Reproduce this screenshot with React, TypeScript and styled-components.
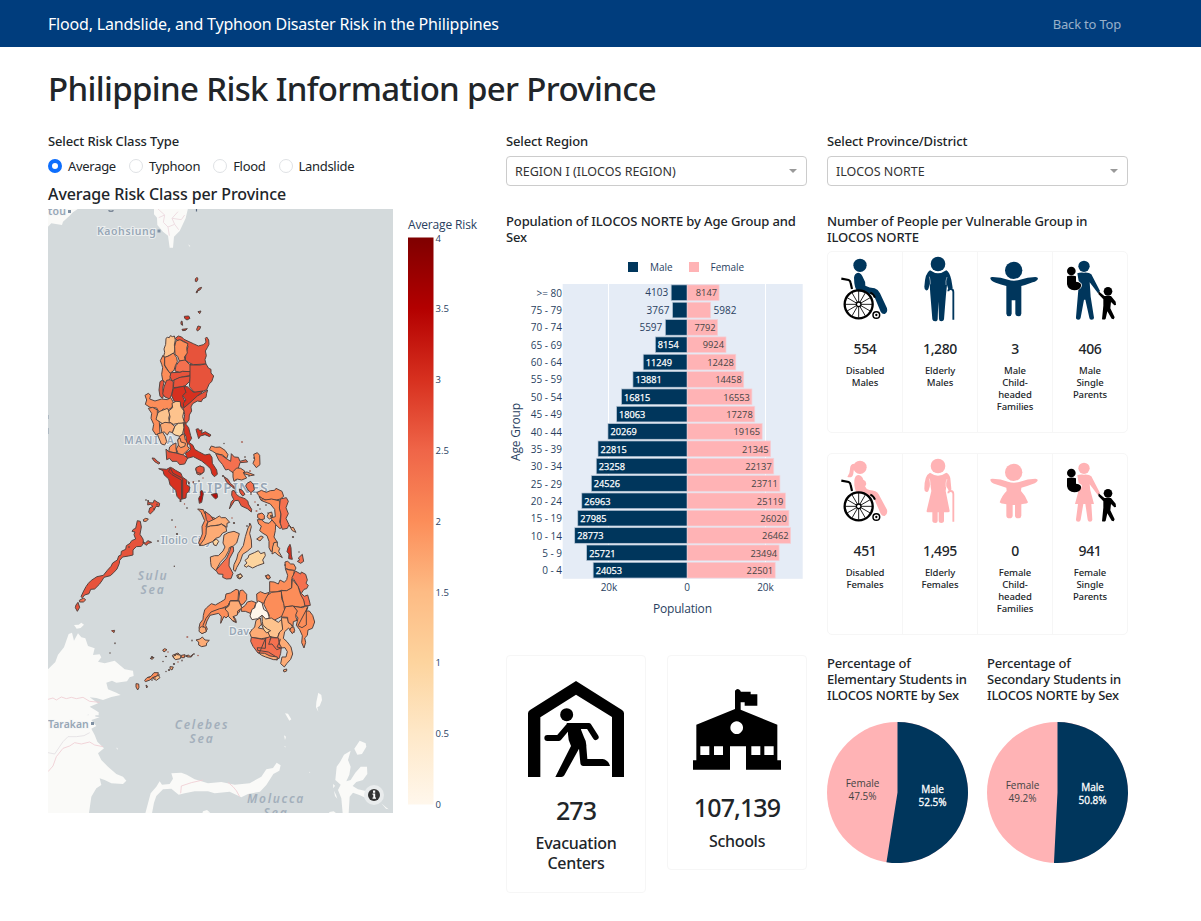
import React from 'react';
import styled, { createGlobalStyle } from 'styled-components';

const NAVY = '#00365c';
const PINK = '#ffb3b5';
const UI = '"Segoe UI", "Noto Sans", sans-serif';
const PLOT = '"Open Sans", "Noto Sans", sans-serif';

const GlobalStyle = createGlobalStyle`
  *, *::before, *::after { box-sizing: border-box; }
  body { margin: 0; background: #fff; color: #212529; font-family: ${UI}; }
  h1, h2, h3, p { margin: 0; font-weight: 500; }
  svg { display: block; }
`;

const Navbar = styled.header`
  display: flex;
  align-items: center;
  justify-content: space-between;
  height: 47px;
  padding: 0 80px 0 48px;
  background: #003d7d;
`;
const Brand = styled.span`
  color: #fff;
  font-size: 16px;
  letter-spacing: -0.19px;
`;
const NavLink = styled.a`
  color: rgba(255, 255, 255, 0.6);
  font-size: 13px;
  letter-spacing: -0.2px;
`;
const Main = styled.main`
  padding: 21px 48px 0;
`;
const PageTitle = styled.h1`
  font-size: 33px;
  line-height: 42px;
  letter-spacing: -0.67px;
  white-space: nowrap;
`;
const Columns = styled.div`
  display: grid;
  grid-template-columns: 434px 301px 301px;
  column-gap: 24px;
  margin-top: 23px;
  & > :last-child { margin-left: -4px; margin-right: 4px; }
`;
const Column = styled.section`
  display: flex;
  flex-direction: column;
`;
const Label = styled.h3`
  font-size: 13px;
  line-height: 16px;
  letter-spacing: -0.12px;
`;
const RadioGroup = styled.div`
  display: flex;
  gap: 13px;
  margin-top: 9px;
`;
const RadioItem = styled.label`
  display: flex;
  align-items: center;
  gap: 6px;
  font-size: 13px;
  line-height: 16px;
  letter-spacing: -0.3px;
`;
const RadioDot = styled.span<{ $on?: boolean }>`
  width: 14px;
  height: 14px;
  border-radius: 50%;
  border: ${(p) => (p.$on ? '4px solid #0d6efd' : '1px solid #dfe2e5')};
  background: #fff;
`;
const MapTitle = styled.h2`
  margin: 10px 0 5px;
  font-size: 16px;
  line-height: 20px;
  letter-spacing: -0.1px;
`;
const Select = styled.div`
  display: flex;
  align-items: center;
  justify-content: space-between;
  height: 30px;
  margin-top: 7px;
  padding: 0 9px 0 8px;
  border: 1px solid #ccc;
  border-radius: 4px;
  color: #333;
  font-size: 12.5px;
  &::after {
    content: '';
    border: 4.5px solid transparent;
    border-top-color: #999;
    border-bottom: 0;
  }
`;
const ChartTitle = styled(Label)`
  margin-top: 27px;
`;
const StatRow = styled.div`
  display: grid;
  grid-template-columns: 140px 140px;
  justify-content: space-between;
  align-items: start;
  margin-top: 10px;
`;
const StatCard = styled.article<{ $top: number; $bottom: number }>`
  display: flex;
  flex-direction: column;
  align-items: center;
  padding: ${(p) => p.$top}px 20px ${(p) => p.$bottom}px;
  border: 1px solid #f6f6f6;
  border-radius: 4px;
  text-align: center;
`;
const StatValue = styled.p<{ $gap: number }>`
  margin-top: ${(p) => p.$gap}px;
  font-size: 25px;
  line-height: 32px;
  letter-spacing: -0.9px;
`;
const StatLabel = styled.p<{ $gap: number }>`
  margin-top: ${(p) => p.$gap}px;
  font-size: 16px;
  line-height: 20px;
  letter-spacing: -0.3px;
`;
const GroupCards = styled.div<{ $gap: number }>`
  display: grid;
  grid-template-columns: 74px repeat(3, 75px);
  width: 301px;
  height: 182px;
  margin-top: ${(p) => p.$gap}px;
  border: 1px solid #f6f6f6;
  border-radius: 5px;
`;
const GroupCard = styled.article`
  display: flex;
  flex-direction: column;
  align-items: center;
  text-align: center;
  & + & { border-left: 1px solid #f6f6f6; }
  & > svg { flex: none; margin-left: -1px; }
`;
const GroupValue = styled.p`
  margin-top: 12px;
  font-size: 14px;
  line-height: 20px;
  letter-spacing: -0.4px;
`;
const GroupLabel = styled.p`
  width: 43px;
  margin-top: 6px;
  font-size: 9.5px;
  line-height: 12px;
  letter-spacing: -0.08px;
`;
const PieRow = styled.div`
  display: grid;
  grid-template-columns: 141px 141px;
  column-gap: 19px;
  margin-top: 20px;
`;
const PieTitle = styled(Label)`
  margin-bottom: 19px;
  white-space: pre-line;
  letter-spacing: -0.22px;
`;
const PlotSvg = styled.svg`
  font-family: ${PLOT};
  overflow: visible;
`;

/* ---------- risk map ---------- */

const C = {
  w: '#fff5ea', a: '#fdd49e', b: '#fdc38d', c: '#fdab75', d: '#fc8d59',
  e: '#f4704f', f: '#e7533b', g: '#d7301f', h: '#b80f0c',
};
type Shape = [keyof typeof C, string];
const provinces: { x: number; y: number; shapes: Shape[] }[] = [
  {
    x: 48, y: 205,
    shapes: [
      ['f', '442,222 447,217 450,222 446,230 442,229'], ['f', '444,262 452,250 461,247 457,254 449,258 447,264'],
      ['f', '450,320 459,318 455,326'], ['g', '409,334 422,333 426,340 417,345 410,340'],
      ['f', '399,350 402,348 404,361 399,358'], ['g', '402,373 418,371 413,376 404,377'],
      ['f', '446,373 450,363 458,365 455,373 448,378'],
    ],
  },
  {
    x: 130, y: 325,
    shapes: [
      ['b', '108,40 112,37 118,38 121,32 128,35 133,33 136,45 133,60 135,72 132,85 118,91 112,95 106,97 101,94 104,82 102,72 107,58'],
      ['f', '136,40 145,33 155,36 162,43 190,56 205,63 220,59 228,52 226,40 230,36 236,45 237,58 232,68 226,78 229,92 225,104 228,117 190,119 175,112 166,105 168,85 174,65 170,54 155,46 142,46'],
      ['d', '138,48 150,44 160,50 174,56 170,70 172,84 163,96 166,108 148,108 143,94 135,88 134,64'],
      ['d', '91,107 99,91 104,99 103,120 110,132 123,146 119,165 112,179 98,165 95,148 98,128 95,118'],
      ['d', '104,97 118,92 130,84 140,98 142,110 136,122 132,136 120,145 110,130 104,120'],
      ['e', '148,108 165,105 178,118 188,120 190,135 175,141 158,139 150,142 135,138 138,122'],
      ['f', '123,143 150,142 158,139 182,140 180,152 160,155 150,158 126,168 120,155'],
      ['f', '132,165 150,157 182,153 178,170 165,183 150,186 130,188'],
      ['f', '180,120 210,120 228,117 236,130 243,133 243,144 251,153 245,170 238,176 230,194 205,205 192,201 178,185 180,160'],
      ['f', '90,170 98,165 102,172 98,190 101,207 98,220 90,214 87,195'],
      ['f', '102,186 110,166 120,164 130,170 129,190 125,208 119,222 105,216 98,207'],
      ['g', '130,190 165,183 168,200 158,215 168,235 158,250 145,232 132,228 125,212'],
      ['g', '162,185 172,185 190,202 219,198 190,225 162,250 160,235 168,225 158,212 168,202'],
      ['f', '233,195 230,205 228,217 218,222 214,230 202,228 188,236 183,246 185,258 178,270 177,285 168,296 162,285 164,268 160,250 180,233 202,213'],
      ['d', '45,211 55,205 62,211 59,222 75,228 95,222 112,224 122,218 130,232 126,247 113,256 100,252 88,262 80,249 60,247 46,238 50,225'],
      ['d', '55,250 68,247 82,255 82,275 88,292 90,325 78,330 68,315 71,298 63,280 65,265'],
      ['b', '84,263 92,258 105,253 112,250 120,265 116,280 120,293 100,298 90,291 78,283'],
      ['b', '126,235 138,229 151,230 152,245 162,258 158,275 163,292 150,298 145,295 130,298 117,290 120,275 116,258 128,248'],
      ['c', '91,298 105,292 122,294 135,305 130,314 128,323 118,320 112,330 102,320 96,325'],
      ['a', '135,303 145,295 160,294 162,308 158,325 150,334 135,330 127,324'],
      ['c', '82,327 98,322 106,335 110,350 104,360 94,357 89,345'],
      ['d', '150,333 162,326 166,345 174,347 172,363 178,371 166,382 158,390 145,387 139,372 147,357 144,345'],
      ['c', '143,344 150,339 153,351 167,355 164,364 152,368 145,360'],
      ['d', '119,366 127,359 138,354 138,370 140,384 127,382 116,380'],
      ['f', '108,372 116,380 137,384 160,390 173,399 164,417 149,419 141,409 126,409 119,400 110,404'],
      ['g', '163,292 176,308 182,332 185,340 177,352 189,361 194,373 206,380 225,390 239,387 246,397 247,415 260,435 262,448 253,455 246,447 242,432 230,420 215,408 190,395 172,400 166,385 181,375 180,361 170,352 168,335 162,323'],
      ['g', '198,313 205,311 210,318 216,314 215,325 226,320 243,330 239,335 225,329 211,333 206,341 203,331'],
      ['d', '238,374 244,363 256,367 270,366 285,376 294,389 290,401 278,390 259,386 248,379'],
      ['e', '257,386 274,390 289,401 302,409 304,386 313,396 325,397 330,409 348,404 353,411 330,413 325,430 310,444 295,433 287,435 277,418 266,405'],
      ['d', '309,440 320,429 332,430 344,438 342,447 350,459 335,465 321,462 312,469 309,456'],
      ['d', '371,388 382,383 389,391 390,419 379,428 369,415 374,403'],
      ['e', '351,475 362,469 370,478 373,494 363,503 354,495 347,483'],
      ['e', '197,431 211,423 222,431 221,442 210,450 201,447'],
      ['g', '86,431 110,433 121,427 128,430 137,436 153,445 157,456 171,466 169,478 180,487 176,500 169,506 168,519 150,524 141,514 137,496 120,479 116,462 102,449 99,437'],
      ['g', '121,429 129,445 158,460 158,519 155,522 154,465 126,449 116,439'],
      ['f', '66,399 74,400 81,408 90,414 86,417 74,410 70,405'],
      ['h', '216,496 220,506 215,532 208,535 206,520 211,511 211,500'], ['h', '244,508 261,505 263,516 257,522 248,514'],
      ['g', '174,470 179,473 176,477'], ['g', '189,471 191,470 190,473'],
    ],
  },
  {
    x: 180, y: 440,
    shapes: [
      ['f', '156,153 162,151 170,164 178,170 195,176 204,184 205,192 215,208 214,216 202,206 184,198 175,181 164,182 148,207 154,185 161,178 155,166'],
      ['f', '132,110 144,118 151,130 161,138 163,146 150,135 140,127'],
      ['f', '178,147 187,151 195,163 188,168 180,158'], ['d', '189,98 201,96 223,105 212,107 195,102'],
      ['d', '230,158 244,151 259,157 271,152 284,151 288,145 306,154 311,169 301,177 289,180 272,178 263,182 245,175 237,167'],
      ['d', '237,169 255,180 275,177 300,183 299,205 303,222 299,246 306,261 300,266 286,253 272,234 286,230 284,208 271,192 255,186 243,181'],
      ['e', '301,177 319,173 325,184 318,203 325,221 318,235 327,254 322,265 307,268 301,250 303,222 298,204'],
      ['c', '327,255 335,263 340,262 348,277 337,272'],
      ['d', '233,223 246,219 253,226 253,237 243,239 233,233'], ['c', '266,219 275,216 278,230 268,237 261,230'],
      ['d', '232,239 244,239 255,248 267,250 276,240 287,253 286,272 282,291 292,307 280,310 284,326 273,335 267,323 267,304 261,287 249,280 239,272 244,258 236,252'],
      ['c', '278,321 282,308 292,306 292,318 299,325 296,334 307,353 294,345 285,337 276,342'],
      ['c', '230,297 243,288 250,291 240,303'], ['d', '53,207 70,209 75,222 83,224 95,231 105,235 107,244 83,246 78,260 86,268 84,283 74,294 73,306 60,318 56,308 67,282 66,259 74,242 63,217'],
      ['e', '75,214 91,226 100,239 88,251 79,239'],
      ['c', '83,247 104,237 118,228 124,233 137,233 149,247 141,250 141,262 125,252 115,255 89,259 79,268'],
      ['c', '79,262 91,258 115,256 124,252 138,262 140,274 128,279 119,291 107,295 97,305 71,316 59,316 73,297 78,283'],
      ['a', '98,305 109,297 116,304 109,317 102,315'],
      ['c', '132,285 144,278 162,274 178,281 175,292 170,309 160,318 148,323 146,332 136,351 121,367 107,392 94,380 92,368 91,351 104,347 115,347 129,333 135,321 129,309'],
      ['e', '153,320 160,321 161,333 148,357 147,378 159,400 153,416 139,417 128,412 129,403 115,402 108,391 124,372 140,354 149,334'],
      ['c', '204,264 211,251 214,260 209,280 214,300 215,322 203,333 188,343 181,364 170,383 166,394 160,390 162,374 170,357 174,341 190,317 196,290'],
      ['a', '207,345 223,338 235,332 242,341 254,337 256,347 248,360 252,370 232,377 218,384 204,377 200,382 192,377 201,369 195,361 204,354'],
      ['b', '170,406 182,401 187,409 180,417 173,414'],
      ['g', '324,323 330,313 333,323 334,345 337,358 326,356 327,342 321,335'],
      ['e', '355,354 367,343 369,354 371,364 362,370 352,364 359,360'], ['d', '256,407 267,405 271,414 261,417'],
      ['f', '48,83 59,78 72,82 72,94 65,101 52,98 48,90'],
    ],
  },
  {
    x: 48, y: 500,
    shapes: [
      ['f', '300,0 303,8 315,9 319,0 327,6 335,10 333,20 324,19 318,31 307,42 302,37 305,24 315,19 307,13 299,15'],
      ['d', '286,59 293,55 301,57 295,64 287,64'],
      ['f', '268,62 277,64 280,81 276,103 285,117 287,129 280,139 265,140 255,150 255,165 242,168 224,171 215,181 214,190 207,207 197,218 187,227 168,232 162,242 154,253 140,267 128,268 123,281 110,285 103,293 99,290 107,273 114,260 121,250 130,241 147,230 166,226 178,211 189,199 194,189 208,180 212,168 219,165 220,154 233,148 235,137 246,130 251,122 263,117 258,104 261,96 252,94 256,88 263,85'],
      ['f', '284,126 292,129 300,122 311,127 302,130 294,136'], ['f', '84,315 90,307 95,322 88,334 82,323'],
      ['e', '94,301 107,294 113,300 106,306 95,306'], ['d', '191,392 200,391 198,398'],
      ['d', '344,450 350,446 357,449 348,456'], ['c', '306,475 318,472 313,478'],
      ['b', '373,466 390,459 398,468 393,476 377,474'], ['d', '400,466 411,464 409,473 400,473'],
      ['d', '412,468 422,465 426,470 436,462 430,471 419,471'], ['c', '366,500 376,501 372,510 366,506'],
      ['d', '290,541 297,533 309,529 318,518 331,518 329,527 314,533 306,540 292,545'], ['b', '313,534 331,526 336,533 325,541'],
      ['d', '264,551 272,552 273,562 269,570 264,561'], ['d', '294,555 299,559 296,564'],
    ],
  },
  {
    x: 170, y: 560,
    shapes: [
      ['d', '345,6 353,4 362,12 371,12 378,24 374,32 357,29 346,25'],
      ['d', '299,65 312,66 325,72 330,60 343,67 350,59 353,46 346,26 358,30 373,31 370,50 365,57 365,84 350,93 335,91 318,96 299,96'],
      ['e', '376,33 392,42 394,36 407,43 412,60 408,70 415,76 410,86 402,88 394,100 403,109 413,105 419,126 421,136 404,138 401,123 393,112 391,96 383,77 371,58 366,53'],
      ['d', '333,92 350,92 365,84 367,58 384,79 392,104 401,120 405,138 391,142 367,138 342,141'],
      ['d', '283,112 305,97 334,94 335,116 341,130 344,152 340,166 326,174 310,182 292,178 298,166 289,148 282,134'],
      ['d', '210,92 218,90 230,103 230,119 220,132 210,136 206,118'],
      ['d', '206,91 198,88 181,99 168,102 165,118 152,126 136,135 124,131 110,143 104,150 100,166 99,178 90,190 87,204 95,220 107,216 103,190 108,180 119,164 131,154 147,151 162,142 174,137 181,123 204,121'],
      ['d', '182,122 206,122 214,137 208,156 202,162 190,153 188,165 197,178 199,188 188,183 176,166 168,174 162,169 152,190 154,170 146,160 120,166 111,183 107,196 112,207 107,216 99,196 108,175 123,156 149,146 171,142'],
      ['c', '180,123 206,123 216,144 203,153 202,165 189,170 198,185 188,182 176,170 174,157 165,147 177,137'],
      ['c', '88,205 94,200 106,202 109,215 96,221 87,214'],
      ['d', '214,145 226,136 232,126 245,123 258,128 252,145 241,160 226,154 214,154'],
      ['d', '260,102 271,95 285,101 298,97 287,116 281,130 261,125'],
      ['w', '246,148 254,144 258,130 266,123 276,128 281,148 293,156 298,173 287,178 276,166 263,176 246,179 240,168'],
      ['b', '276,166 287,177 304,174 325,187 336,177 338,208 327,219 323,234 300,230 288,232 294,218 280,203 277,185'],
      ['c', '258,181 271,174 274,193 265,204 280,207 293,215 301,232 274,236 244,232 239,219 246,209 254,201'],
      ['a', '274,192 292,207 302,212 290,219 282,210'],
      ['d', '347,140 368,138 385,150 377,169 381,181 370,185 369,198 360,192 353,184 353,172 334,171'],
      ['d', '371,139 397,143 408,138 413,140 409,153 418,153 428,166 434,186 427,205 414,210 412,226 404,234 407,247 402,264 395,248 397,227 389,209 379,196 384,174 377,165 382,153'],
      ['d', '414,140 409,153 409,195 396,203 384,197'],
      ['c', '334,173 352,174 355,188 363,193 370,205 373,217 363,215 356,204 344,215 340,235 351,245 363,261 368,282 362,298 351,310 343,321 332,311 336,291 348,291 352,275 345,263 332,264 327,244 323,233 329,216 338,208'],
      ['e', '244,232 278,238 303,229 300,240 318,251 331,238 327,252 334,261 332,280 327,296 301,288 281,280 264,279 249,259 242,244'],
      ['e', '287,234 286,265 262,263 263,271 295,276 321,292 322,300 302,295 287,287 268,279'],
      ['e', '303,233 326,234 327,249 321,261 334,264 320,269 306,252 296,253'],
      ['c', '266,279 284,280 300,288 322,291 321,299 311,299 287,291 275,286'],
      ['c', '78,240 90,237 97,231 105,240 118,241 110,249 109,257 95,260 86,255 86,246'],
      ['d', '288,48 294,44 301,51 297,58 290,54'], ['d', '362,204 371,200 374,212 367,221 360,211'],
      ['c', '340,330 350,327 350,333 342,336'], ['a', '203,46 211,43 218,49 208,55'],
      ['b', '9,290 19,283 33,286 31,296 16,299'],
    ],
  },
];

const specks: [number, number][] = [
  [112.7, 631], [129, 547], [174.3, 566.3], [180.5, 501], [184.5, 504], [187, 508], [158, 541], [172, 520], [175.5, 527], [177, 534],
  [110, 653], [115, 643.3], [187.3, 637], [192, 640.5], [163, 661.5], [152, 657], [168, 652], [175.3, 655], [187, 656], [194, 654], [198, 655.5],
  [169, 670], [166, 671.5], [159, 675], [155, 678], [152, 680], [149, 677.5], [174, 664], [178, 662], [182, 660.5], [166, 656.5], [157, 504.5],
  [255, 502], [258, 505], [260, 509], [262, 500], [256.5, 511], [266, 505], [268, 513], [271, 516], [259, 514], [251, 494], [247, 526], [249.5, 524],
  [232, 518], [234, 523], [224, 443.5], [245, 457], [250, 471], [249, 476], [236, 480], [223, 476], [193, 482],
  [146, 500], [154, 509], [199, 481], [203, 478], [293, 537], [299, 552], [285, 565], [242, 442], [254, 458],
];

const scaleStops = ['#fff7ec', '#fee8c8', '#fdd49e', '#fdbb84', '#fc8d59', '#ef6548', '#d7301f', '#b30000', '#7f0000'];
const scaleTicks = ['4', '3.5', '3', '2.5', '2', '1.5', '1', '0.5', '0'];

const MapText = styled.text<{ $sea?: boolean; $size?: number }>`
  font-family: "Noto Sans", sans-serif;
  font-size: ${(p) => p.$size ?? (p.$sea ? 12 : 10.5)}px;
  font-weight: 600;
  font-style: ${(p) => (p.$sea ? 'italic' : 'normal')};
  letter-spacing: ${(p) => (p.$sea ? 1.7 : 0.2)}px;
  text-anchor: ${(p) => (p.$sea ? 'middle' : 'start')};
  fill: ${(p) => (p.$sea ? '#a3afbb' : '#98a7b7')};
  stroke: ${(p) => (p.$sea ? 'none' : 'rgba(245, 246, 246, 0.75)')};
  stroke-width: 2px;
  paint-order: stroke;
`;

function RiskMap() {
  return (
    <PlotSvg width={434} height={604} viewBox="48 209 434 604">
      <defs>
        <linearGradient id="risk" x1="0" y1="1" x2="0" y2="0">
          {scaleStops.map((c, i) => <stop key={c} offset={i / 8} stopColor={c} />)}
        </linearGradient>
        <clipPath id="frame"><rect x={48} y={209} width={345} height={604} /></clipPath>
      </defs>
      <g clipPath="url(#frame)">
        <rect x={48} y={209} width={345} height={604} fill="#d4dadc" />
        <g transform="translate(48 620) scale(.33333)" fill="#fafaf8" strokeLinejoin="round">
          <path d="M0,148L22,126 30,104 48,82 62,42 72,38 78,62 90,40 100,52 112,55 120,78 140,85 135,105 155,103 160,112 150,125 170,130 200,122 230,148 255,152 257,168 245,172 237,184 205,188 192,182 175,188 180,208 205,218 218,225 190,231 165,240 145,234 125,232 150,250 125,260 150,275 115,286 155,292 130,300 145,318 130,326 140,345 148,365 168,385 150,400 160,420 180,440 205,462 225,470 235,482 225,492 190,490 170,480 155,475 160,495 145,505 130,530 120,600 0,600Z" />
          <path d="M78,15L92,14 100,8 108,14 98,24 86,26Z M122,276h30v10h-30z M92,286h50v8h-50z" />
          <path d="M292,580L300,550 308,520 325,500 335,484 342,494 365,492 375,476 370,460 400,458 416,464 440,478 480,490 520,486 560,494 605,490 640,470 655,448 675,444 686,428 698,436 694,452 676,462 655,495 636,515 600,522 580,532 545,515 500,520 480,514 440,514 410,520 392,524 370,506 345,508 325,528 318,548 312,580Z" />
          <path d="M908,392L888,404 876,426 866,440 862,480 878,494 870,510 880,535 884,580 902,580 905,530 915,518 936,526 958,536 975,532 950,512 930,508 914,498 925,486 945,480 958,462 957,440 938,440 922,458 908,480 895,484 904,464 908,440 900,420Z" />
          <path d="M935,362L953,370 955,380 942,402 928,404 919,386Z M811,218L820,225 822,240 815,258 808,262 811,275 804,262 805,246Z M711,280L720,281 730,298 724,302Z M708,346l6,4-3,10z M709,378l3,0 0,5z M855,492l6,5-5,8z M858,512l6,12 4,12-7-8z M1000,550l12,10 10,8-8-2z M845,576l12-2 8,6-24,1z M465,574l12-4 10,8-24,2z M205,383l4,1-1,6z M784,455l3,2-3,2z" />
          <g fill="none" stroke="#efcdd2" strokeWidth="2.5">
            <path d="M0,238L15,234 25,240 40,231 55,236 70,232 85,236 105,232 125,244 155,247" />
            <path d="M0,455L15,438 25,410 45,385 65,378 80,368 100,372 125,366 140,375 165,380" />
            <path d="M540,487L555,500 565,512 575,530 M398,520L400,498 430,488 465,480" />
            <path d="M0,398L20,402 45,365 60,350 85,350 108,347 125,338" stroke="#e2dfe2" />
          </g>
        </g>
        <g transform="translate(48 205) scale(.33333)" fill="#fafaf8">
          <path d="M318,10L318,28 327,38 328,60 345,80 360,92 365,128 375,128 378,95 395,78 413,40 420,10Z M0,65L10,55 42,60 45,50 65,32 75,22 95,8 0,8Z M420,118l7,5-2,2z" />
          <path d="M330,12L350,30 346,52 360,66 380,58 372,40 390,20 M350,30L332,38 M372,40L400,44 410,30 M360,66L364,92 M380,58L392,74" fill="none" stroke="#eedde2" strokeWidth="3" />
        </g>
        <MapText x={97} y={235} textLength={59}>Kaohsiung</MapText>
        <MapText x={48} y={215}>tou</MapText>
        <path d="M108.500 210.500q2.500 1.500 5 0M196.500 209v2.500" fill="none" stroke="#5d6c80" strokeWidth="1.200" />
        <path d="M157.500 229.500h3v3h-3z M68 210h3v3h-3z M91 722h3v3h-3z" fill="#7f90a3" />
        <MapText x={124} y={444} textLength={50}>MANILA</MapText>
        <MapText $size={14} x={171} y={493} textLength={97}>PHILIPPINES</MapText>
        <MapText x={161} y={544}>Iloilo City</MapText>
        <MapText x={229} y={635}>Davao</MapText>
        <MapText x={48} y={728} textLength={41}>Tarakan</MapText>
        <MapText $sea x={153} y={580}>Sulu</MapText>
        <MapText $sea x={153} y={594}>Sea</MapText>
        <MapText $sea x={202} y={729}>Celebes</MapText>
        <MapText $sea x={202} y={743}>Sea</MapText>
        <MapText $sea x={276} y={803}>Molucca</MapText>
        <MapText $sea x={276} y={817}>Sea</MapText>
        {provinces.map((g) => (
          <g key={`${g.x}-${g.y}`} transform={`translate(${g.x} ${g.y}) scale(.33333)`} stroke="#55433f" strokeWidth="3" strokeLinejoin="round">
            {g.shapes.map(([c, pts], i) => <polygon key={i} fill={C[c]} points={pts} />)}
          </g>
        ))}
        {specks.map(([x, y], i) => (
          <ellipse key={i} cx={x} cy={y} rx={i % 3 ? 0.7 : 1.1} ry={i % 2 ? 1 : 0.7} fill={i % 4 ? '#55433f' : '#a04b3c'} />
        ))}
        <path d="M48 415v4M48 428v6" stroke="#a3b0bc" strokeWidth="1.500" />
        <circle cx={374} cy={795} r={10} fill="#e9eced" />
        <circle cx={374} cy={795} r={6} fill="#333" />
        <path d="M373 790.500h2.200v2.200H373zM372.500 793.500h2.700v4h.8v1.300h-3.500v-1.300h.8v-2.700h-.8z" fill="#fff" />
      </g>
      <text x={408} y={229} fontSize={12} textLength={69} fill="#2a3f5f">Average Risk</text>
      <rect x={408} y={237.500} width={25.500} height={567} fill="url(#risk)" />
      {scaleTicks.map((t, i) => <text key={t} x={435.500} y={241.500 + i * 70.800} fontSize={9.500} fill="#2a3f5f">{t}</text>)}
    </PlotSvg>
  );
}

/* ---------- population pyramid ---------- */

const population: [string, number, number][] = [
  ['>= 80', 4103, 8147], ['75 - 79', 3767, 5982], ['70 - 74', 5597, 7792], ['65 - 69', 8154, 9924],
  ['60 - 64', 11249, 12428], ['55 - 59', 13881, 14458], ['50 - 54', 16815, 16553], ['45 - 49', 18063, 17278],
  ['40 - 44', 20269, 19165], ['35 - 39', 22815, 21345], ['30 - 34', 23258, 22137], ['25 - 29', 24526, 23711],
  ['20 - 24', 26963, 25119], ['15 - 19', 27985, 26020], ['10 - 14', 28773, 26462], ['5 - 9', 25721, 23494],
  ['0 - 4', 24053, 22501],
];

function Pyramid() {
  const zero = 687.2;
  const k = 0.00391;
  const band = 294.8 / 17;
  return (
    <PlotSvg width={301} height={400} viewBox="506 245 301 400" fill="#2a3f5f">
      <rect x={628} y={262} width={10} height={10} fill={NAVY} />
      <text x={650} y={271} fontSize={10}>Male</text>
      <rect x={689} y={262} width={10} height={10} fill={PINK} />
      <text x={710.500} y={271} fontSize={10}>Female</text>
      <rect x={562.700} y={284} width={240} height={294.800} fill="#e5ecf6" />
      <path d="M608.500 284v294.800M765.500 284v294.800" stroke="#fff" />
      {population.map(([age, m, f], i) => {
        const y = 284 + i * band;
        const base = y + band / 2 + 3.8;
        const mOut = m < 6000;
        const fOut = f < 6000;
        return (
          <g key={age} fontSize={9.3}>
            <rect x={zero - m * k} y={y + 0.9} width={m * k} height={band - 1.700} fill={NAVY} stroke="#b9c7d6" strokeWidth=".7" />
            <rect x={zero} y={y + 0.9} width={f * k} height={band - 1.700} fill={PINK} stroke="#f3d0d7" strokeWidth=".7" />
            <text x={zero - m * k + (mOut ? -3 : 2.500)} y={base} fontSize={mOut ? 10 : 9.2} textAnchor={mOut ? 'end' : 'start'} fill={mOut ? '#2a3f5f' : '#fff'} stroke={mOut ? 'none' : '#fff'} strokeWidth=".25">{m}</text>
            <text x={zero + f * k + (fOut ? 3 : -2)} y={base} fontSize={fOut ? 10 : 9.3} textAnchor={fOut ? 'start' : 'end'} fill={fOut ? '#2a3f5f' : '#444'}>{f}</text>
            <text x={562} y={base + 0.3} fontSize={10} textAnchor="end">{age}</text>
          </g>
        );
      })}
      <g fontSize={10} textAnchor="middle">
        <text x={609} y={590.500}>20k</text>
        <text x={687} y={590.500}>0</text>
        <text x={765.500} y={590.500}>20k</text>
      </g>
      <text x={682.500} y={613} fontSize={12} textAnchor="middle" textLength={59}>Population</text>
      <text transform="translate(519.500 432) rotate(-90)" fontSize={12} textAnchor="middle" textLength={58}>Age Group</text>
    </PlotSvg>
  );
}

/* ---------- people icons ---------- */

type IconProps = { female?: boolean };
const frame = (col: number) => ({ width: 75, height: 75, viewBox: `${23 + col * 225} 21 225 225` });
const tone = (female?: boolean) => (female ? PINK : NAVY);

function Wheelchair({ female }: IconProps) {
  const spokes = Array.from({ length: 12 }, (_, i) => (i * Math.PI) / 6);
  return (
    <svg {...frame(0)}>
      <g fill={tone(female)}>
        <circle cx="122" cy="61" r="20" />
        {female && <path d="M106,50Q92,50 92,66Q92,80 84,90Q100,94 102,80Q103,70 105,64Z" />}
        <path d={female
          ? 'M105,100Q107,84 118,84Q128,86 132,98Q143,102 140,114L137,118Q140,127 150,129Q172,130 178,142L203,188Q206,203 196,207Q188,208 184,200L163,152Q145,142 112,137Q106,128 105,115Z'
          : 'M104,98Q105,84 117,83Q126,84 132,100Q140,112 138,122Q150,128 166,130Q176,133 182,145L203,190Q206,203 196,207Q188,208 184,200L163,150Q140,143 112,137Q106,126 105,115Z'} />
      </g>
      <g fill="none" stroke="#000">
        <path d="M66,101L88,105Q93,107 94,114L98,132" strokeWidth="6.500" />
        <circle cx="118" cy="178" r="42" strokeWidth="7" />
        <path d={spokes.map((a) => `M118,178L${118 + 40 * Math.cos(a)},${178 + 40 * Math.sin(a)}`).join('')} strokeWidth="2.600" />
        <circle cx="118" cy="178" r="7" strokeWidth="4" fill="#fff" />
        <circle cx="171" cy="210" r="10" strokeWidth="4.500" />
        <path d="M153,143Q162,146 167,158" strokeWidth="6" />
      </g>
      <circle cx="171" cy="210" r="3.500" />
    </svg>
  );
}

function Elderly({ female }: IconProps) {
  return (
    <svg {...frame(1)}>
      <g fill={tone(female)}>
        <circle cx="356" cy="57" r="22" />
        {female ? (
          <path d="M332,77Q345,86 356,86Q368,86 381,77Q390,80 393,94L396,125Q397,133 389,132L381,118L379,132L391,192Q391,196 386,196L374,196V223Q373,228 366,228Q358,228 358,222V196H355V222Q355,228 348,228Q340,228 339,223V196L325,196Q321,195 322,191L336,132L333,113L328,130Q326,137 320,134Q315,133 315,125Q315,85 332,77Z" />
        ) : (
          <path d="M332,76Q345,85 356,85Q368,85 381,76Q391,82 396,104L400,128Q396,135 387,133L383,120L380,148L374,223Q373,229 366,229Q359,229 359,222L357,170L355,222Q355,229 347,229Q340,229 339,223L333,148L331,116L328,130Q326,138 320,136Q315,134 315,125Q317,84 332,76Z" />
        )}
      </g>
      <path d="M387,139Q387,132 394,132Q402,132 402,141V224" fill="none" stroke={tone(female)} strokeWidth="5.500" />
      <path d="M330,95Q334,110 333,118M383,96Q378,109 380,120" fill="none" stroke="#fff" strokeWidth="1.500" />
    </svg>
  );
}

function Child({ female }: IconProps) {
  return (
    <svg {...frame(2)} fill={tone(female)}>
      <circle cx="583" cy="76" r="26" />
      {female ? (
        <path d="M513,99Q512,95 520,95Q545,95 566,104Q584,110 602,104Q625,95 648,95Q656,96 655,100Q654,107 640,111Q620,119 606,122L605,132Q618,145 626,166Q626,170 606,172V206Q605,214 598,214Q587,214 587,206V174H580V206Q579,214 570,214Q562,214 561,206V172Q543,170 541,166Q548,145 562,132L561,122Q545,118 529,112Q514,107 513,99Z" />
      ) : (
        <path d="M513,100Q512,96 520,96Q545,96 566,104Q584,110 602,104Q625,96 648,96Q656,97 656,101Q654,108 640,112Q620,120 606,123V206Q605,214 598,214Q588,214 588,206V166H577V206Q576,214 569,214Q562,214 561,206V123Q545,119 529,113Q514,108 513,100Z" />
      )}
    </svg>
  );
}

function SingleParent({ female }: IconProps) {
  return (
    <svg {...frame(3)}>
      <g fill={tone(female)}>
        <circle cx="794" cy="64" r="17" />
        <path d={female
          ? 'M774,85Q780,82 794,83Q810,82 816,88L842,138L836,145L811,112L813,130L824,171H816L819,218Q818,224 812,224Q806,224 805,218L798,171H792L784,218Q783,224 777,224Q769,224 770,217L776,171H767L778,130Q790,122 787,114L778,108Z'
          : 'M774,85Q780,82 794,83Q810,82 816,88L842,138L836,145L811,112L814,155L824,218Q824,224 817,224Q810,224 810,218L798,164L794,164L784,218Q783,224 777,224Q769,224 770,217L777,135Q790,128 787,116L778,108Z'} />
      </g>
      <circle cx="756" cy="78" r="13" />
      <path d="M743,94Q756,89 770,94V110Q788,112 785,124Q782,136 765,136Q746,135 743,118Z" />
      <circle cx="866" cy="139" r="13" />
      <path d="M838,139L855,153H875L889,170L890,180L885,181L875,171L873,190L886,217L883,223L877,221L864,199L859,221Q857,225 848,223L852,182V163L837,147Z" />
    </svg>
  );
}

const groups = [
  { Icon: Wheelchair, male: '554', female: '451', name: 'Disabled', plural: true },
  { Icon: Elderly, male: '1,280', female: '1,495', name: 'Elderly', plural: true },
  { Icon: Child, male: '3', female: '0', name: 'Child-headed Families', plural: false },
  { Icon: SingleParent, male: '406', female: '941', name: 'Single Parents', plural: false },
];

function VulnerableGroups({ female, gap }: IconProps & { gap: number }) {
  const sex = female ? 'Female' : 'Male';
  return (
    <GroupCards $gap={gap}>
      {groups.map(({ Icon, name, plural, ...g }) => (
        <GroupCard key={name}>
          <Icon female={female} />
          <GroupValue>{female ? g.female : g.male}</GroupValue>
          <GroupLabel>{plural ? `${name} ${sex}s` : `${sex} ${name}`}</GroupLabel>
        </GroupCard>
      ))}
    </GroupCards>
  );
}

/* ---------- facilities ---------- */

function EvacuationIcon() {
  return (
    <svg width={96} height={96} viewBox="84 93 288 288">
      <path d="M228,93L366,180Q372,184 372,190V381H336V201L228,134L121,202V381H84V190Q84,184 90,180Z" />
      <circle cx="200" cy="194" r="19.500" />
      <path d="M142,264H176L205,230M225,228H266L287,261" fill="none" stroke="#000" strokeWidth="18" strokeLinecap="round" strokeLinejoin="round" />
      <path d="M200,219H238Q242,240 252,262Q260,275 259,290L262,327H308Q325,330 330,348H250Q241,347 241,338L237,296L193,376Q190,381 184,381H166L213,288Q203,270 204,248Z" />
    </svg>
  );
}

function SchoolIcon() {
  return (
    <svg width={88} height={82} viewBox="578 115 264 246">
      <path fillRule="evenodd" d="M704,178V123Q712,112 721,124V126H751V134H771V168H733V158H721V180L831,225V332H842V360H737V290H689V360H578V332H588V225ZM709,215a19,19 0 1 0 .1,0ZM600,290h27v26h-27zM641,290h27v26h-27zM753,290h27v26h-27zM792,290h28v26h-28z" />
    </svg>
  );
}

/* ---------- student shares ---------- */

function Pie({ male, female, split, dy }: { male: string; female: string; split: number; dy: number }) {
  const a = split * 2 * Math.PI;
  const x = 70.5 + 70.5 * Math.sin(a);
  const y = 70.5 - 70.5 * Math.cos(a);
  return (
    <PlotSvg width={141} height={141} viewBox="0 0 141 141" fontSize={10} textAnchor="middle">
      <circle cx={70.5} cy={70.5} r={70.5} fill={PINK} />
      <path d={`M70.500,70.500V0A70.500,70.500 0 1 1 ${x},${y}Z`} fill={NAVY} />
      <g fill="#444">
        <text x={35.5} y={65 + dy}>Female</text>
        <text x={35.5} y={78 + dy}>{female}</text>
      </g>
      <g fill="#fff" stroke="#fff" strokeWidth=".3">
        <text x={105.5} y={71 - dy}>Male</text>
        <text x={105.5} y={84 - dy}>{male}</text>
      </g>
    </PlotSvg>
  );
}

export default function App() {
  return (
    <>
      <GlobalStyle />
      <Navbar>
        <Brand>Flood, Landslide, and Typhoon Disaster Risk in the Philippines</Brand>
        <NavLink>Back to Top</NavLink>
      </Navbar>
      <Main>
        <PageTitle>Philippine Risk Information per Province</PageTitle>
        <Columns>
          <Column>
            <Label>Select Risk Class Type</Label>
            <RadioGroup>
              {['Average', 'Typhoon', 'Flood', 'Landslide'].map((name, i) => (
                <RadioItem key={name}><RadioDot $on={i === 0} />{name}</RadioItem>
              ))}
            </RadioGroup>
            <MapTitle>Average Risk Class per Province</MapTitle>
            <RiskMap />
          </Column>
          <Column>
            <Label>Select Region</Label>
            <Select>REGION I (ILOCOS REGION)</Select>
            <ChartTitle>Population of ILOCOS NORTE by Age Group and Sex</ChartTitle>
            <Pyramid />
            <StatRow>
              <StatCard $top={25} $bottom={19}>
                <EvacuationIcon />
                <StatValue $gap={17}>273</StatValue>
                <StatLabel $gap={7}>Evacuation Centers</StatLabel>
              </StatCard>
              <StatCard $top={32} $bottom={18}>
                <SchoolIcon />
                <StatValue $gap={21}>107,139</StatValue>
                <StatLabel $gap={8}>Schools</StatLabel>
              </StatCard>
            </StatRow>
          </Column>
          <Column>
            <Label>Select Province/District</Label>
            <Select>ILOCOS NORTE</Select>
            <ChartTitle>Number of People per Vulnerable Group in ILOCOS NORTE</ChartTitle>
            <VulnerableGroups gap={6} />
            <VulnerableGroups gap={20} female />
            <PieRow>
              <div>
                <PieTitle>{'Percentage of\nElementary Students in\nILOCOS NORTE by Sex'}</PieTitle>
                <Pie male="52.5%" female="47.5%" split={0.525} dy={0} />
              </div>
              <div>
                <PieTitle>{'Percentage of\nSecondary Students in\nILOCOS NORTE by Sex'}</PieTitle>
                <Pie male="50.8%" female="49.2%" split={0.508} dy={2} />
              </div>
            </PieRow>
          </Column>
        </Columns>
      </Main>
    </>
  );
}
